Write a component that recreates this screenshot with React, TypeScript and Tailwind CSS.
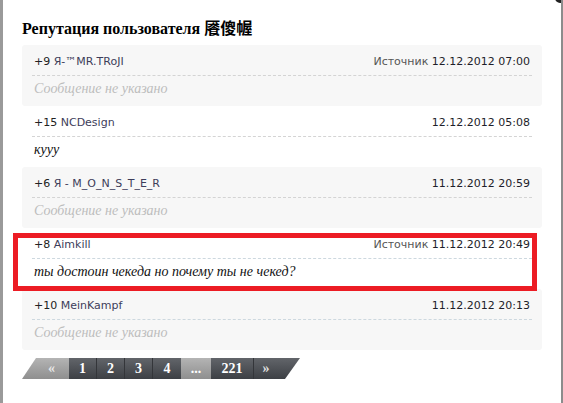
import React from "react";

type Row = {
  rep: string;
  user: string;
  source?: boolean;
  date: string;
  msg?: string;
  gray: boolean;
  blueDash?: boolean;
};

const rows: Row[] = [
  { rep: "+9", user: "Я-™MR.TRoJI", source: true, date: "12.12.2012 07:00", gray: true },
  { rep: "+15", user: "NCDesign", date: "12.12.2012 05:08", msg: "куyy", gray: false },
  { rep: "+6", user: "Я - M_O_N_S_T_E_R", date: "11.12.2012 20:59", gray: true },
  { rep: "+8", user: "Aimkill", source: true, date: "11.12.2012 20:49", msg: "ты достоин чекеда но почему ты не чекед?", gray: false, blueDash: true },
  { rep: "+10", user: "MeinKampf", date: "11.12.2012 20:13", gray: true, blueDash: true },
];

function RepRow({ r }: { r: Row }) {
  return (
    <div className={`rounded-[3px] px-[10px] pt-[7px] pb-[7px] ${r.gray ? "bg-[#f7f7f7]" : "bg-white"}`}>
      <div className="flex h-[20px] items-center justify-between px-[2px] text-[11px] leading-[20px] [font-family:'DejaVu_Sans',sans-serif]">
        <div className="text-[#222]">
          {r.rep} <span className="text-[#3d3d5a]">{r.user}</span>
        </div>
        <div className="text-[#1e1e2a]">
          {r.source && <span className="text-[#555]">Источник </span>}
          {r.date}
        </div>
      </div>
      <div className={`mt-[3px] border-t border-dashed ${r.blueDash ? "border-[#cdd8df]" : "border-[#d4d4d4]"}`} />
      <div
        className={`mt-[3px] h-[20px] px-[2px] text-[14px] italic leading-[20px] [font-family:'Liberation_Serif',serif] ${
          r.msg ? "text-[#111]" : "text-[#bdbdbd]"
        }`}
      >
        {r.msg ?? "Сообщение не указано"}
      </div>
    </div>
  );
}

function Seg({ children, light, w, sep = true }: { children: React.ReactNode; light?: boolean; w: string; sep?: boolean }) {
  return (
    <div
      className={`flex h-full items-center justify-center ${w} ${
        light ? "bg-gradient-to-b from-[#b4b4b4] to-[#8f8f8f]" : "bg-gradient-to-b from-[#62656a] to-[#3d4045]"
      } ${sep ? "border-r border-[#34363a]" : ""}`}
    >
      {children}
    </div>
  );
}

export default function App() {
  return (
    <div className="relative h-[403px] w-[563px] overflow-hidden border-l-[3px] border-r-[2px] border-l-[#9a9a9a] border-r-[#8c8c8c] bg-white">
      <div className="absolute right-[-6px] top-[-9px] h-[14px] w-[14px] rounded-full border-2 border-white bg-[#222]" />
      <div className="pl-[19px] pr-[18px] pt-[19px]">
        <h1 className="h-[20px] text-[16px] font-bold leading-[20px] text-black [font-family:'Liberation_Serif','Noto_Sans_CJK_SC',serif]">
          Репутация пользователя 餍傻幄
        </h1>
        <div className="mt-[6px] flex w-[520px] flex-col">
          {rows.map((r, i) => (
            <RepRow key={i} r={r} />
          ))}
        </div>
        <div className="mt-[8px] flex h-[21px] w-[278px] text-[14px] font-bold text-white [font-family:'Liberation_Serif',serif] [clip-path:polygon(14px_0,100%_0,calc(100%-15px)_100%,0_100%)]">
          <Seg light w="w-[47px]" sep={false}>
            <span className="pl-[12px] text-[#e8e8e8]">«</span>
          </Seg>
          <Seg w="w-[28px]">1</Seg>
          <Seg w="w-[28px]">2</Seg>
          <Seg w="w-[28px]">3</Seg>
          <Seg w="w-[28px]" sep={false}>4</Seg>
          <Seg light w="w-[30px]" sep={false}>...</Seg>
          <Seg w="w-[43px]">221</Seg>
          <Seg w="w-[46px]" sep={false}>
            <span className="pr-[22px] text-[#e0e0e0]">»</span>
          </Seg>
        </div>
      </div>
      <div className="pointer-events-none absolute left-[10px] top-[233px] h-[58px] w-[524px] border-[5px] border-[#ec1c24]" />
    </div>
  );
}
